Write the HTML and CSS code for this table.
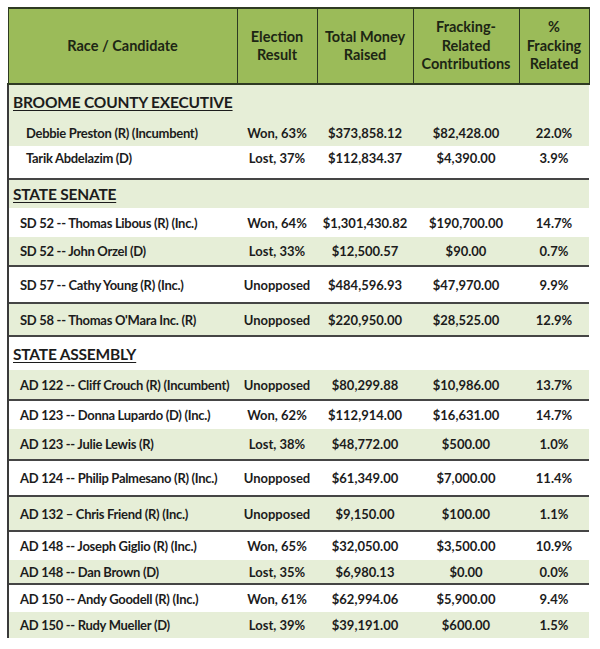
FILE: index.html
```html
<!DOCTYPE html>
<html>
<head>
<meta charset="utf-8">
<link rel="stylesheet" href="styles.css">
</head>
<body>
<div class="wrap">
<table class="money">
  <colgroup>
    <col class="c1"><col class="c2"><col class="c3"><col class="c4"><col class="c5">
  </colgroup>
  <thead>
    <tr>
      <th>Race / Candidate</th>
      <th>Election<br>Result</th>
      <th>Total Money<br>Raised</th>
      <th>Fracking-<br>Related<br>Contributions</th>
      <th>%<br>Fracking<br>Related</th>
    </tr>
  </thead>
  <tbody>
    <tr class="sec g h35"><td colspan="5">BROOME COUNTY EXECUTIVE</td></tr>
    <tr class="g h27 ind"><td>Debbie Preston (R) (Incumbent)</td><td>Won, 63%</td><td>$373,858.12</td><td>$82,428.00</td><td>22.0%</td></tr>
    <tr class="w h33 ind top"><td>Tarik Abdelazim (D)</td><td>Lost, 37%</td><td>$112,834.37</td><td>$4,390.00</td><td>3.9%</td></tr>

    <tr class="sec g h29 rule"><td colspan="5">STATE SENATE</td></tr>
    <tr class="w h29"><td>SD 52 -- Thomas Libous (R) (Inc.)</td><td>Won, 64%</td><td>$1,301,430.82</td><td>$190,700.00</td><td>14.7%</td></tr>
    <tr class="g h29"><td>SD 52 -- John Orzel (D)</td><td>Lost, 33%</td><td>$12,500.57</td><td>$90.00</td><td>0.7%</td></tr>
    <tr class="w h37 rule"><td>SD 57 -- Cathy Young (R) (Inc.)</td><td>Unopposed</td><td>$484,596.93</td><td>$47,970.00</td><td>9.9%</td></tr>
    <tr class="g h33 rule"><td>SD 58 -- Thomas O'Mara Inc. (R)</td><td>Unopposed</td><td>$220,950.00</td><td>$28,525.00</td><td>12.9%</td></tr>

    <tr class="sec w h34 rule"><td colspan="5">STATE ASSEMBLY</td></tr>
    <tr class="g h30"><td>AD 122 -- Cliff Crouch (R) (Incumbent)</td><td>Unopposed</td><td>$80,299.88</td><td>$10,986.00</td><td>13.7%</td></tr>
    <tr class="w h29 rule"><td>AD 123 -- Donna Lupardo (D) (Inc.)</td><td>Won, 62%</td><td>$112,914.00</td><td>$16,631.00</td><td>14.7%</td></tr>
    <tr class="g h31"><td>AD 123 -- Julie Lewis (R)</td><td>Lost, 38%</td><td>$48,772.00</td><td>$500.00</td><td>1.0%</td></tr>
    <tr class="w h36 rule"><td>AD 124 -- Philip Palmesano (R) (Inc.)</td><td>Unopposed</td><td>$61,349.00</td><td>$7,000.00</td><td>11.4%</td></tr>
    <tr class="g h35 rule"><td>AD 132 – Chris Friend (R) (Inc.)</td><td>Unopposed</td><td>$9,150.00</td><td>$100.00</td><td>1.1%</td></tr>
    <tr class="w h29 rule"><td>AD 148 -- Joseph Giglio (R) (Inc.)</td><td>Won, 65%</td><td>$32,050.00</td><td>$3,500.00</td><td>10.9%</td></tr>
    <tr class="g h24"><td>AD 148 -- Dan Brown (D)</td><td>Lost, 35%</td><td>$6,980.13</td><td>$0.00</td><td>0.0%</td></tr>
    <tr class="w h28 rule"><td>AD 150 -- Andy Goodell (R) (Inc.)</td><td>Won, 61%</td><td>$62,994.06</td><td>$5,900.00</td><td>9.4%</td></tr>
    <tr class="g h26"><td>AD 150 -- Rudy Mueller (D)</td><td>Lost, 39%</td><td>$39,191.00</td><td>$600.00</td><td>1.5%</td></tr>
  </tbody>
</table>
</div>
</body>
</html>
```

FILE: styles.css
```css
html, body {
  margin: 0;
  padding: 0;
  background: #ffffff;
}
.wrap {
  padding: 7px 0 0 7px;
}
.money {
  border-collapse: collapse;
  table-layout: fixed;
  width: 581px;
  font-family: Lato, "Open Sans", sans-serif;
  font-weight: 700;
  color: #1c1c1c;
}
.c1 { width: 229px; }
.c2 { width: 80px; }
.c3 { width: 96px; }
.c4 { width: 106px; }
.c5 { width: 70px; }

.money th {
  background: #9bbb59;
  color: #1d2614;
  font-size: 14.5px;
  line-height: 18.5px;
  height: 74px;
  padding: 0;
  border: 1px solid #2e3a22;
  border-top-width: 2px;
  border-bottom-width: 2px;
  text-align: center;
  vertical-align: middle;
}
.money td {
  padding: 0;
  font-size: 13px;
  text-align: center;
  vertical-align: middle;
  white-space: nowrap;
}
.money td:first-child {
  text-align: left;
  padding-left: 11px;
  font-size: 13px;
  letter-spacing: -0.3px;
  border-left: 2px solid #3a3a3a;
}
.money .ind td:first-child { padding-left: 17px; }
.money .top td { padding-bottom: 8px; }
.money .sec td {
  font-size: 15.5px;
  letter-spacing: -0.2px;
  text-decoration: underline;
  text-underline-offset: 2px;
  padding-left: 4px;
}
.g { background: #e6eed7; }
.w { background: #ffffff; }
.rule td { border-top: 2px solid #454545; }

.h24 { height: 24px; }
.h26 { height: 26px; }
.h27 { height: 27px; }
.h28 { height: 28px; }
.h29 { height: 29px; }
.h30 { height: 30px; }
.h31 { height: 31px; }
.h33 { height: 33px; }
.h34 { height: 34px; }
.h35 { height: 35px; }
.h36 { height: 36px; }
.h37 { height: 37px; }
```
